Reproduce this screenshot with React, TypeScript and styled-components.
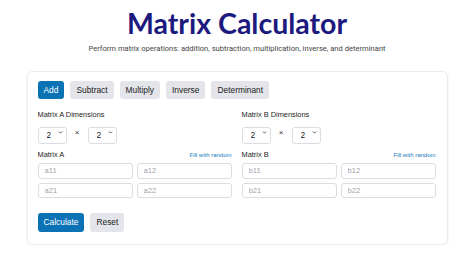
import React, { useState } from 'react'
import styled, { createGlobalStyle } from 'styled-components'
import { ChevronDown } from 'lucide-react'

const GlobalStyle = createGlobalStyle`
    body {
        margin: 0;
        background: #ffffff;
        font-family: "Liberation Sans", Arial, sans-serif;
        color: #222;
    }
`

const Page = styled.div`
    width: 421px;
    margin: 0 auto;
    padding-top: 6px;
`

const Title = styled.h1`
    margin: 0;
    text-align: center;
    font-family: Lato, "Open Sans", sans-serif;
    font-weight: 700;
    font-size: 28.5px;
    line-height: 34px;
    color: #1c1a7e;
`

const Subtitle = styled.p`
    margin: 4px 0 0;
    text-align: center;
    font-family: Roboto, sans-serif;
    font-size: 7.6px;
    line-height: 10px;
    color: #444;
`

const Card = styled.div`
    margin-top: 17px;
    border: 1px solid #ececef;
    border-radius: 6px;
    box-shadow: 0 1px 3px rgba(0, 0, 0, 0.08);
    padding: 8.5px 11px 12px 10px;
`

const Tabs = styled.div`
    display: flex;
    gap: 6px;
`

const Button = styled.button<{ $primary?: boolean }>`
    height: 18.5px;
    padding: 0 6px;
    border: none;
    border-radius: 3px;
    font-family: "Liberation Sans", Arial, sans-serif;
    font-size: 8.4px;
    color: ${({ $primary }) => ($primary ? '#ffffff' : '#222')};
    background: ${({ $primary }) => ($primary ? '#0b72b6' : '#e3e5ea')};
    cursor: pointer;
`

const Columns = styled.div`
    display: grid;
    grid-template-columns: 194px 194px;
    column-gap: 10px;
    margin-top: 11px;
`

const Column = styled.div`
    display: flex;
    flex-direction: column;
`

const Label = styled.div`
    font-size: 7.4px;
    line-height: 10px;
    color: #222;
`

const DimRow = styled.div`
    display: flex;
    align-items: center;
    margin-top: 4px;
`

const SelectWrap = styled.div`
    position: relative;
    width: 29px;
    height: 17px;
`

const Select = styled.select`
    appearance: none;
    box-sizing: border-box;
    width: 100%;
    height: 100%;
    border: 1px solid #dcdde2;
    border-radius: 3px;
    background: #fff;
    font-family: "Liberation Sans", Arial, sans-serif;
    font-size: 8.4px;
    color: #222;
    padding: 0 0 0 8px;
`

const Chevron = styled(ChevronDown)`
    position: absolute;
    right: 4px;
    top: 6px;
    pointer-events: none;
`

const Times = styled.span`
    width: 21px;
    text-align: center;
    font-size: 8px;
    color: #333;
`

const MatrixHead = styled.div`
    display: flex;
    justify-content: space-between;
    align-items: center;
    margin-top: 9px;
`

const FillLink = styled.a`
    font-size: 6px;
    color: #1577c0;
    text-decoration: none;
`

const Grid = styled.div`
    display: grid;
    grid-template-columns: 1fr 1fr;
    gap: 4px;
    margin-top: 3px;
`

const Cell = styled.input`
    box-sizing: border-box;
    height: 15.5px;
    width: 100%;
    border: 1px solid #dcdde2;
    border-radius: 3px;
    padding: 0 6px;
    font-family: "Liberation Sans", Arial, sans-serif;
    font-size: 7.6px;
    color: #222;
    outline: none;
    &::placeholder {
        color: #a3a3a8;
    }
`

const Actions = styled.div`
    display: flex;
    gap: 6px;
    margin-top: 15px;
`

const ops = ['Add', 'Subtract', 'Multiply', 'Inverse', 'Determinant']

const DimSelect = () => (
    <SelectWrap>
        <Select defaultValue="2">
            <option>1</option>
            <option>2</option>
            <option>3</option>
        </Select>
        <Chevron size={5} strokeWidth={4} color="#333" />
    </SelectWrap>
)

const MatrixColumn = ({ name }: { name: string }) => {
    const p = name.toLowerCase()
    return (
        <Column>
            <Label>Matrix {name} Dimensions</Label>
            <DimRow>
                <DimSelect />
                <Times>×</Times>
                <DimSelect />
            </DimRow>
            <MatrixHead>
                <Label>Matrix {name}</Label>
                <FillLink href="#">Fill with random</FillLink>
            </MatrixHead>
            <Grid>
                <Cell placeholder={`${p}11`} />
                <Cell placeholder={`${p}12`} />
                <Cell placeholder={`${p}21`} />
                <Cell placeholder={`${p}22`} />
            </Grid>
        </Column>
    )
}

export default function App() {
    const [op, setOp] = useState('Add')
    return (
        <>
            <GlobalStyle />
            <Page>
                <Title>Matrix Calculator</Title>
                <Subtitle>Perform matrix operations: addition, subtraction, multiplication, inverse, and determinant</Subtitle>
                <Card>
                    <Tabs>
                        {ops.map((o) => (
                            <Button key={o} $primary={o === op} onClick={() => setOp(o)}>
                                {o}
                            </Button>
                        ))}
                    </Tabs>
                    <Columns>
                        <MatrixColumn name="A" />
                        <MatrixColumn name="B" />
                    </Columns>
                    <Actions>
                        <Button $primary>Calculate</Button>
                        <Button>Reset</Button>
                    </Actions>
                </Card>
            </Page>
        </>
    )
}
